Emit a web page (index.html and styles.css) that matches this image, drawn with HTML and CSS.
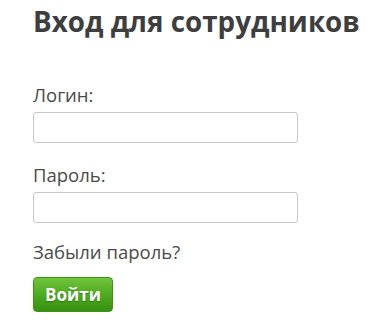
FILE: index.html
```html
<!DOCTYPE html>
<html lang="ru">
<head>
<meta charset="utf-8">
<link rel="stylesheet" href="styles.css">
</head>
<body>
<div class="page">
  <h1 class="title">Вход для сотрудников</h1>
  <form class="form">
    <label class="label" for="login">Логин:</label>
    <input class="field" id="login" type="text">
    <label class="label" for="pass">Пароль:</label>
    <input class="field" id="pass" type="password">
    <a class="forgot" href="#">Забыли пароль?</a>
    <button class="btn" type="button">Войти</button>
  </form>
</div>
</body>
</html>
```
FILE: styles.css
```css
html, body {
  margin: 0;
  padding: 0;
  background: #fff;
}
.page {
  padding: 2px 0 0 33px;
  font-family: "Open Sans", "Liberation Sans", sans-serif;
  color: #444;
}
.title {
  margin: 0;
  font-size: 27.8px;
  line-height: 38px;
  font-weight: 700;
  color: #3e3e3e;
}
.form {
  display: flex;
  flex-direction: column;
  align-items: flex-start;
  margin-top: 45px;
}
.label {
  font-size: 18.5px;
  line-height: 20px;
  color: #4a4a4a;
}
.field {
  box-sizing: border-box;
  width: 265px;
  height: 31px;
  margin: 7px 0 22px;
  border: 1px solid #c8c8c8;
  border-radius: 3px;
  background: #fff;
  padding: 0 6px;
}
.forgot {
  margin-top: -3px;
  font-size: 18.5px;
  line-height: 20px;
  color: #4a4a4a;
  text-decoration: none;
}
.btn {
  margin-top: 15px;
  box-sizing: border-box;
  width: 80px;
  height: 35px;
  border: 1px solid #3a9410;
  border-radius: 4px;
  background: linear-gradient(#72c43e, #4aa91c 55%, #389010);
  color: #fff;
  font-family: "Open Sans", "Liberation Sans", sans-serif;
  font-weight: 700;
  font-size: 17px;
  text-shadow: 0 1px 1px rgba(0,0,0,0.3);
  padding: 0;
}
```
